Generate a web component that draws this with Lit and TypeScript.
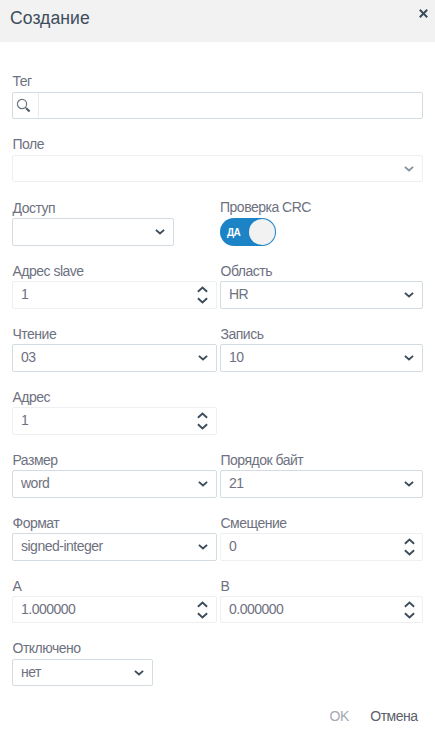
import { LitElement, html, svg, css, nothing } from "lit";
import { customElement, property } from "lit/decorators.js";
import { classMap } from "lit/directives/class-map.js";

const chevronDown = html`<svg class="chevron" width="10" height="6" viewBox="0 0 10 6">
  ${svg`<path d="M0.9 0.9 L5 4.5 L9.1 0.9" fill="none" stroke="currentColor" stroke-width="1.9"/>`}
</svg>`;

const stepperArrows = html`<svg class="stepper" width="11" height="18" viewBox="0 0 11 18">
  ${svg`<path d="M0.9 5.8 L5.5 1.6 L10.1 5.8 M0.9 12.2 L5.5 16.4 L10.1 12.2" fill="none" stroke="currentColor" stroke-width="1.9"/>`}
</svg>`;

@customElement("form-field")
class FormField extends LitElement {
  @property() label = "";
  @property() value = "";
  @property() kind: "select" | "number" | "search" = "select";
  @property({ type: Boolean }) disabled = false;
  @property({ type: Boolean }) short = false;
  @property({ type: Boolean }) raised = false;

  static styles = css`
    :host { display: block; }
    .label { height: 19px; line-height: 19px; white-space: nowrap; padding-left: 0.5px; }
    .raised { line-height: 17px; }
    .box {
      box-sizing: border-box;
      display: flex;
      align-items: center;
      justify-content: space-between;
      height: 28px;
      border: 1px solid #d3dce0;
      border-radius: 2px;
      padding: 0 8px;
      background: #fff;
    }
    .short { height: 27px; }
    .number, .disabled { border-color: #eeeff0; }
    .search { justify-content: flex-start; padding: 0; }
    .value { line-height: 24px; height: 26px; }
    .chevron, .stepper { display: block; color: #3c4c5a; }
    .stepper { margin-right: -0.5px; }
    .disabled .chevron { color: #89939b; }
    .lens {
      display: flex;
      align-items: center;
      box-sizing: border-box;
      width: 26px;
      height: 100%;
      padding-left: 3px;
      border-right: 1px solid #e7ebed;
    }
    .lens svg { display: block; }
  `;

  render() {
    const classes = {
      box: true,
      number: this.kind === "number",
      search: this.kind === "search",
      disabled: this.disabled,
      short: this.short,
    };
    return html`
      <div class=${classMap({ label: true, raised: this.raised })}>${this.label}</div>
      <div class=${classMap(classes)}>
        ${this.kind === "search"
          ? html`<span class="lens"><svg width="15" height="15" viewBox="0 0 15 15">
              <circle cx="6" cy="6" r="4.6" fill="none" stroke="#68747f" stroke-width="1.2"/>
              <path d="M9.2 9.2 L10.4 10.4" stroke="#68747f" stroke-width="1.2"/>
              <path d="M10.2 10.2 L13.6 13.5" stroke="#4b5864" stroke-width="2.1"/>
            </svg></span>`
          : nothing}
        <span class="value">${this.value}</span>
        ${this.kind === "select" ? chevronDown : this.kind === "number" ? stepperArrows : nothing}
      </div>
    `;
  }
}

@customElement("toggle-field")
class ToggleField extends LitElement {
  @property() label = "";
  @property() text = "";

  static styles = css`
    :host { display: block; }
    .label { height: 19px; line-height: 17px; white-space: nowrap; }
    .track {
      box-sizing: border-box;
      display: flex;
      align-items: center;
      justify-content: space-between;
      width: 56px;
      height: 28px;
      padding: 0 1px 0 7px;
      border-radius: 14px;
      background: #1c84c6;
      color: #fff;
      font-size: 10px;
      font-weight: bold;
      letter-spacing: -0.6px;
    }
    .knob { width: 26px; height: 26px; border-radius: 50%; background: #f2f2f2; }
  `;

  render() {
    return html`
      <div class="label">${this.label}</div>
      <div class="track"><span>${this.text}</span><span class="knob"></span></div>
    `;
  }
}

@customElement("app-root")
class AppRoot extends LitElement {
  static styles = css`
    :host {
      display: block;
      height: 737px;
      overflow: hidden;
      background: #fff;
      color: #6e717f;
      font: 14px "Liberation Sans", Arial, sans-serif;
      letter-spacing: -0.5px;
    }
    .header {
      box-sizing: border-box;
      display: flex;
      justify-content: space-between;
      align-items: flex-start;
      height: 42px;
      padding: 8px 7px 0 10px;
      background: #f2f2f2;
    }
    .title { margin: 0; font-size: 17.6px; font-weight: normal; line-height: 20px; letter-spacing: 0.05px; color: #3e4d5c; }
    .close { display: block; margin-top: 1px; }
    .form {
      display: grid;
      grid-template-columns: 204.5px 203px;
      grid-auto-rows: 63px;
      column-gap: 3.5px;
      padding: 31px 12px 0;
    }
    .wide { grid-column: 1 / -1; }
    .alone { grid-column: 1; }
    .access { width: 162px; }
    .off { width: 141px; }
    .footer {
      display: flex;
      justify-content: flex-end;
      gap: 21.5px;
      padding-right: 17.5px;
      margin-top: 4px;
      line-height: 18px;
    }
    .ok { color: #a5a8b2; }
    .cancel { color: #5c606a; }
  `;

  render() {
    return html`
      <div class="header">
        <h1 class="title">Создание</h1>
        <svg class="close" width="9" height="9" viewBox="0 0 9 9">
          <path d="M0.8 0.8 L8.2 8.2 M8.2 0.8 L0.8 8.2" stroke="#3c4c5a" stroke-width="2"/>
        </svg>
      </div>
      <div class="form">
        <form-field class="wide" label="Тег" kind="search" short raised></form-field>
        <form-field class="wide" label="Поле" disabled short raised></form-field>
        <form-field class="access" label="Доступ"></form-field>
        <toggle-field label="Проверка CRC" text="ДА"></toggle-field>
        <form-field label="Адрес slave" kind="number" value="1"></form-field>
        <form-field label="Область" value="HR"></form-field>
        <form-field label="Чтение" value="03"></form-field>
        <form-field label="Запись" value="10"></form-field>
        <form-field class="alone" label="Адрес" kind="number" value="1"></form-field>
        <form-field class="alone" label="Размер" value="word"></form-field>
        <form-field label="Порядок байт" value="21"></form-field>
        <form-field label="Формат" value="signed-integer"></form-field>
        <form-field label="Смещение" kind="number" value="0"></form-field>
        <form-field label="A" kind="number" value="1.000000" short></form-field>
        <form-field label="B" kind="number" value="0.000000" short></form-field>
        <form-field class="off" label="Отключено" value="нет" short raised></form-field>
      </div>
      <div class="footer">
        <span class="ok">OK</span>
        <span class="cancel">Отмена</span>
      </div>
    `;
  }
}
